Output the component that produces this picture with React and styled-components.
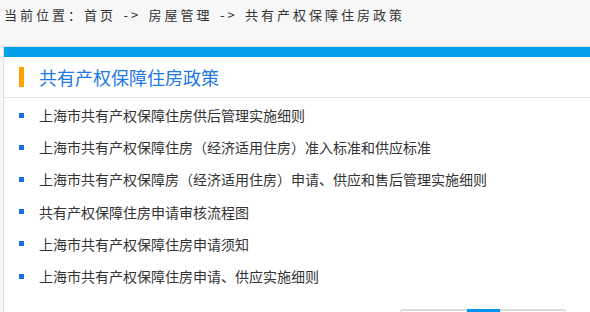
import React from "react";
import styled, { createGlobalStyle } from "styled-components";

const Global = createGlobalStyle`
  html, body { margin: 0; padding: 0; overflow: hidden; }
  body {
    background: #f7f7f7;
    font-family: "Noto Sans CJK SC", "Noto Sans", sans-serif;
    color: #333;
    text-spacing-trim: space-all;
  }
`;

const Page = styled.div`
  width: 980px;
`;

const Breadcrumb = styled.div`
  height: 30px;
  line-height: 30px;
  padding-left: 4px;
  font-size: 13px;
  letter-spacing: 3px;
  word-spacing: 1.5px;
  color: #333;
  white-space: pre;
  margin-bottom: 16px;
`;

const Panel = styled.div`
  margin-left: 3px;
  width: 958px;
  background: #fff;
  border: 1px solid #e3e3e3;
`;

const TopBar = styled.div`
  height: 10px;
  background: #00a0e9;
`;

const TitleRow = styled.div`
  height: 40px;
  display: flex;
  align-items: center;
  gap: 15px;
  padding-left: 15px;
  border-bottom: 1px solid #e5e5e5;
`;

const Marker = styled.span`
  width: 5px;
  height: 20px;
  background: #ffa200;
`;

const Title = styled.h2`
  margin: 0;
  font-size: 18px;
  font-weight: normal;
  color: #2378e0;
  line-height: 20px;
`;

const List = styled.ul`
  list-style: none;
  margin: 0;
  padding: 1px 0 0 0;
`;

const Item = styled.li`
  height: 32.2px;
  display: flex;
  align-items: center;
  padding-left: 15px;
  gap: 15px;
  font-size: 14px;
  color: #333;
`;

const Bullet = styled.span`
  width: 5px;
  height: 5px;
  background: #1a6fd6;
`;

const Pager = styled.div`
  display: flex;
  justify-content: center;
  margin-top: 17px;
  padding-bottom: 20px;
`;

const PageBtn = styled.span`
  box-sizing: border-box;
  height: 28px;
  line-height: 26px;
  width: ${(p) => p.$w}px;
  text-align: center;
  font-size: 12px;
  border: 1px solid ${(p) => (p.$active ? "#0095f0" : "#ddd")};
  border-top-width: 2px;
  background: ${(p) => (p.$active ? "#0095f0" : "#fff")};
  color: ${(p) => (p.$active ? "#fff" : "#666")};
  border-radius: ${(p) => p.$r};
`;

const items = [
  "上海市共有产权保障住房供后管理实施细则",
  "上海市共有产权保障住房（经济适用住房）准入标准和供应标准",
  "上海市共有产权保障房（经济适用住房）申请、供应和售后管理实施细则",
  "共有产权保障住房申请审核流程图",
  "上海市共有产权保障住房申请须知",
  "上海市共有产权保障住房申请、供应实施细则",
];

export default function App() {
  return (
    <Page>
      <Global />
      <Breadcrumb>当前位置：首页 -> 房屋管理 -> 共有产权保障住房政策</Breadcrumb>
      <Panel>
        <TopBar />
        <TitleRow>
          <Marker />
          <Title>共有产权保障住房政策</Title>
        </TitleRow>
        <List>
          {items.map((t) => (
            <Item key={t}>
              <Bullet />
              {t}
            </Item>
          ))}
        </List>
        <Pager>
          <PageBtn $w={67} $r="3px 0 0 3px">上一页</PageBtn>
          <PageBtn $w={33} $r="0" $active>1</PageBtn>
          <PageBtn $w={66} $r="0 3px 3px 0">下一页</PageBtn>
        </Pager>
      </Panel>
    </Page>
  );
}
